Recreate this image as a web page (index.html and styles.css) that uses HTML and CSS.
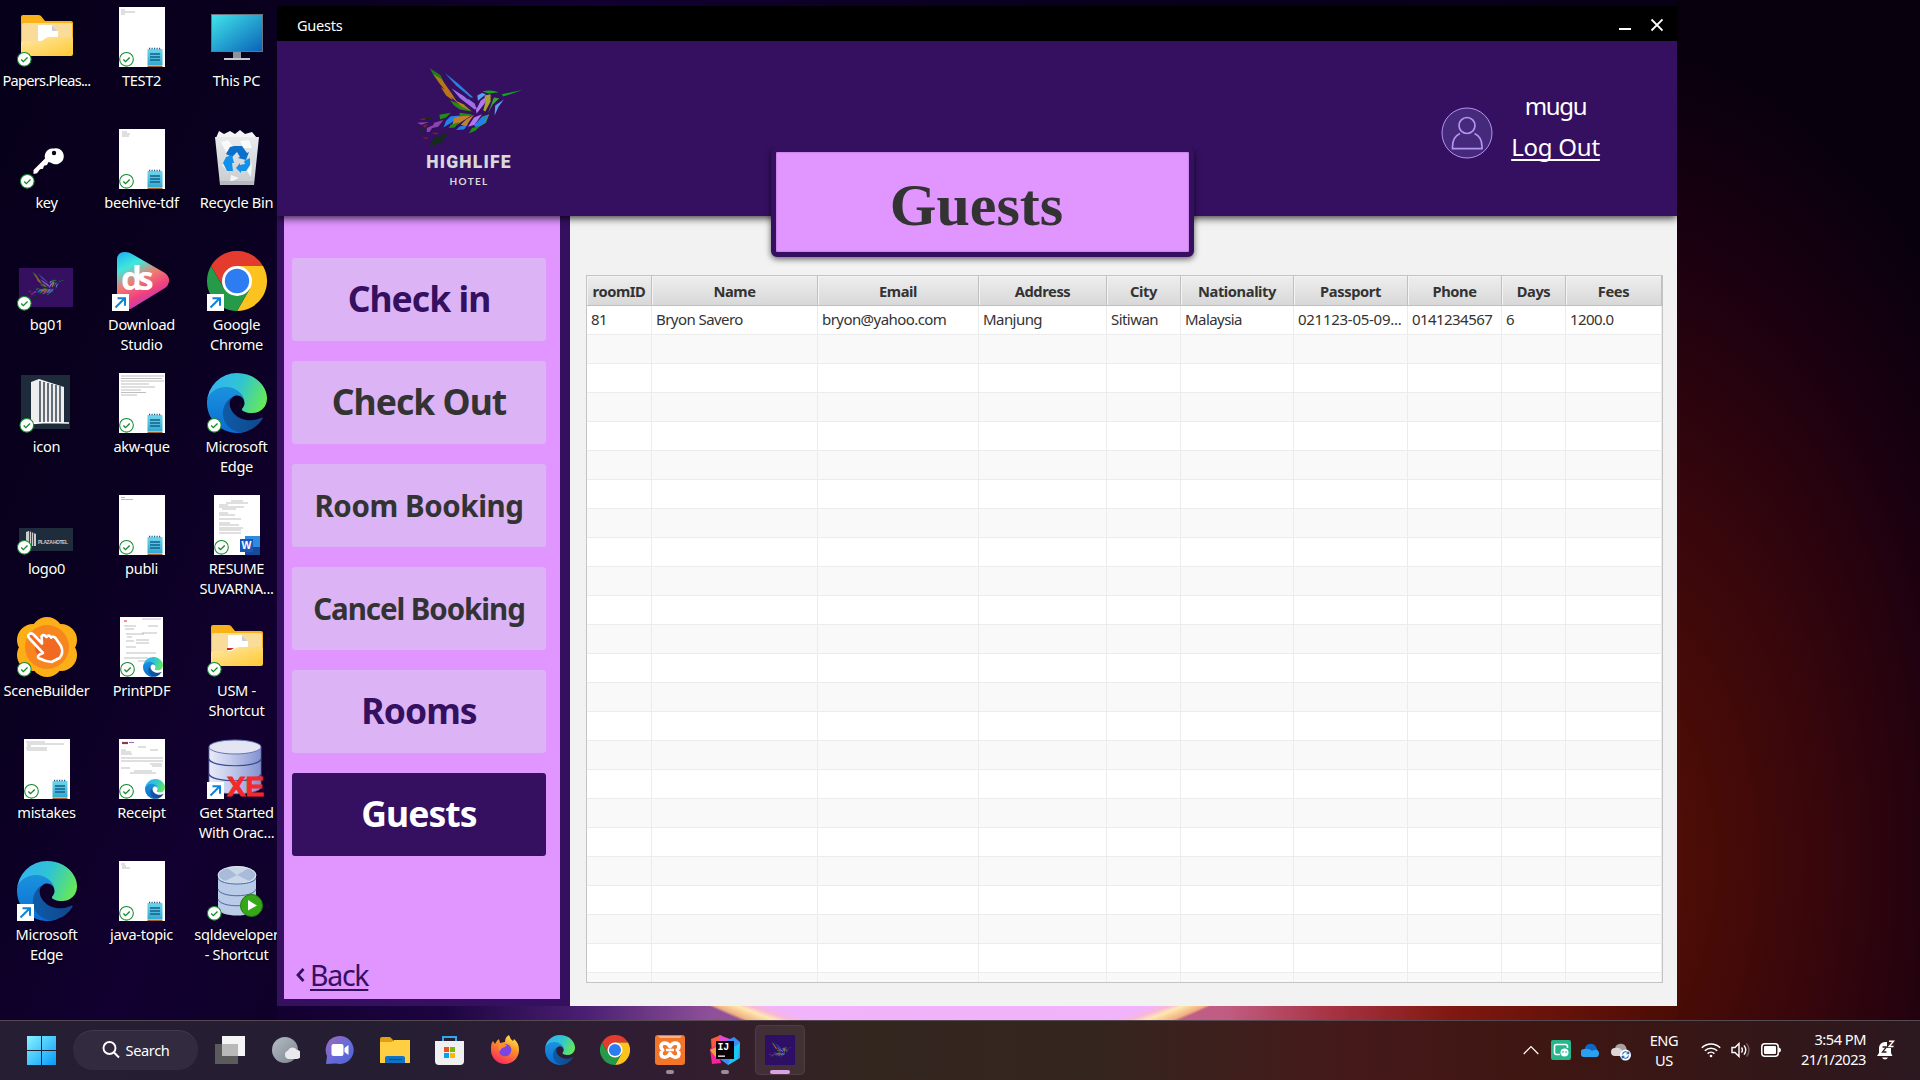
FILE: index.html
```html
<!DOCTYPE html>
<html lang="en">
<head>
<meta charset="utf-8">
<title>Guests</title>
<link rel="stylesheet" href="styles.css">
</head>
<body>
<svg class="defs" aria-hidden="true">
  <defs>
    <linearGradient id="gFolder" x1="0" y1="0" x2="1" y2="1"><stop offset="0" stop-color="#ffe9a6"/><stop offset="1" stop-color="#ffc832"/></linearGradient>
    <linearGradient id="gScreen" x1="0" y1="0" x2="1" y2="1"><stop offset="0" stop-color="#40e4ea"/><stop offset="1" stop-color="#0a63b8"/></linearGradient>
    <linearGradient id="gPad" x1="0" y1="0" x2="0" y2="1"><stop offset="0" stop-color="#6fd6ee"/><stop offset="1" stop-color="#35a9cf"/></linearGradient>
    <linearGradient id="gEdge1" x1="0" y1=".3" x2="1" y2=".6"><stop offset="0" stop-color="#36b0f5"/><stop offset=".5" stop-color="#2fc5d2"/><stop offset="1" stop-color="#66e858"/></linearGradient>
    <linearGradient id="gEdge2" x1=".3" y1="0" x2=".3" y2="1"><stop offset="0" stop-color="#1c95de"/><stop offset="1" stop-color="#0a6cd2"/></linearGradient>
    <linearGradient id="gEdge3" x1="0" y1="0" x2="1" y2="0"><stop offset="0" stop-color="#0e5ca8"/><stop offset="1" stop-color="#10478c"/></linearGradient>
    <linearGradient id="gDs" x1=".1" y1="0" x2=".55" y2="1"><stop offset="0" stop-color="#20b8f0"/><stop offset=".25" stop-color="#3fe8dc"/><stop offset=".5" stop-color="#ee7f70"/><stop offset=".75" stop-color="#f0407f"/><stop offset="1" stop-color="#a03cd8"/></linearGradient>
    <linearGradient id="gDb" x1="0" y1="0" x2="1" y2="0"><stop offset="0" stop-color="#e9ebf8"/><stop offset=".4" stop-color="#c5cdec"/><stop offset="1" stop-color="#8292d0"/></linearGradient>
    <linearGradient id="gBin" x1="0" y1="0" x2="0" y2="1"><stop offset="0" stop-color="#e8eaec"/><stop offset="1" stop-color="#c9ccd0"/></linearGradient>
    <linearGradient id="gWin" x1="0" y1="0" x2="1" y2="1"><stop offset="0" stop-color="#86f3ff"/><stop offset="1" stop-color="#089af8"/></linearGradient>
    <linearGradient id="gChat" x1="0" y1="0" x2="1" y2="1"><stop offset="0" stop-color="#a267b8"/><stop offset=".5" stop-color="#6a6bd8"/><stop offset="1" stop-color="#4b62d8"/></linearGradient>
    <linearGradient id="gFox" x1=".8" y1="0" x2=".3" y2="1"><stop offset="0" stop-color="#fff04a"/><stop offset=".45" stop-color="#ff8a28"/><stop offset="1" stop-color="#f82860"/></linearGradient>
    <linearGradient id="gGrey" x1="0" y1="0" x2="1" y2="1"><stop offset="0" stop-color="#b5bcc4"/><stop offset="1" stop-color="#7c858e"/></linearGradient>

    <symbol id="ok" viewBox="0 0 16 16"><circle cx="8" cy="8" r="7" fill="#fff" stroke="#128a2c" stroke-width="1.1"/><path d="M4.8 8.2l2.2 2.2 4.3-4.3" fill="none" stroke="#128a2c" stroke-width="1.4"/></symbol>
    <symbol id="link" viewBox="0 0 17 17"><path d="M0 0h17v17H0z" fill="#fff"/><path d="M3.5 13.5L12 5M5.5 4.3H13v7.4" fill="none" stroke="#0f82d8" stroke-width="2"/></symbol>
    <symbol id="edge" viewBox="0 0 256 256">
      <path fill="url(#gEdge3)" d="M231 190.500c-3.400 1.800-6.900 3.400-10.500 4.700a101.200 101.200 0 0 1-35.800 6.500c-47.200 0-88.200-32.500-88.200-74.100 0-11.400 6.400-21.900 16.400-27.300-42.700 1.800-53.700 46.300-53.700 72.300 0 73.800 68 81.200 82.600 81.200 7.900 0 19.800-2.300 27-4.600l1.300-.4a128.300 128.300 0 0 0 66.600-52.800 4 4 0 0 0-5.700-5.500z"/>
      <path fill="url(#gEdge2)" d="M105.700 241.400a79.200 79.200 0 0 1-22.700-21.300 80.700 80.700 0 0 1 29.500-120.100c3.200-1.500 8.400-4.100 15.500-4a32.400 32.400 0 0 1 25.700 13 31.900 31.900 0 0 1 6.300 18.700c0-.2 24.500-79.600-80-79.600-43.900 0-80 41.700-80 78.200-.2 19.300 4 38.500 12.100 56a128 128 0 0 0 156.400 67 75.500 75.500 0 0 1-62.800-8z"/>
      <path fill="url(#gEdge1)" d="M152.300 148.900c-.9 1-3.400 2.500-3.400 5.600 0 2.600 1.700 5.200 4.800 7.300 14.400 10.100 41.700 8.700 41.800 8.700 10.700 0 21.300-2.900 30.500-8.400A61.800 61.800 0 0 0 256 109c.3-22.300-8-37.200-11.300-43.800C223.500 23.900 177.700 0 128 0A128 128 0 0 0 0 126.200c.5-36.500 36.800-66 80-66 3.500 0 23.500.3 42 10.100 16.300 8.600 24.900 18.900 30.800 29.200 6.200 10.700 7.300 24.200 7.300 29.500s-2.700 13.400-7.800 19.900z"/>
    </symbol>
    <symbol id="chrome" viewBox="0 0 60 60">
      <path fill="#e33b2e" d="M4 15A30 30 0 0 1 56 15L30 15 17 37.500z"/>
      <path fill="#fcc31e" d="M56 15A30 30 0 0 1 30 60L43 37.500 30 15z"/>
      <path fill="#259a49" d="M30 60A30 30 0 0 1 4 15L17 37.500 43 37.500z"/>
      <circle cx="30" cy="30" r="15" fill="#fff"/><circle cx="30" cy="30" r="12.200" fill="#2e7cf2"/>
    </symbol>
    <symbol id="folder" viewBox="0 0 60 60">
      <path fill="#f9b21a" d="M4 10q0-2 2-2h15q2 0 3 1l4 5h26q2 0 2 2v20H4z"/>
      <path fill="#f8dc98" d="M5 18q0-2 2-2h46q2 0 2 2v20H5z"/>
      <path fill="#fff" d="M21 18h14l6 6v14H21z"/><path fill="#cdcdd6" d="M35 18v6h6z"/>
      <path fill="url(#gFolder)" d="M4 36q0-2 2-2h17q2 0 3-1l3-2q2-1 4-1h21q2 0 2 2v15q0 2-2 2H6q-2 0-2-2z"/>
    </symbol>
    <symbol id="pad" viewBox="0 0 16 20"><path fill="url(#gPad)" d="M.5 2h15v16H.5z"/><path fill="#a4602c" d="M.5 18.500h15V20H.5z"/><path stroke="#12628c" stroke-width="1.300" d="M3 7h10M3 10h10M3 13h10"/><path stroke="#12628c" stroke-width="1.500" stroke-dasharray="1.200 1.300" d="M2 1.500h12.500"/></symbol>
    <symbol id="sheet" viewBox="0 0 60 60"><path fill="#fff" d="M7 0h46v60H7z"/><use href="#pad" x="35" y="40" width="16" height="20"/><use href="#ok" x="6.700" y="44.500" width="15.600" height="15.600"/></symbol>
    <symbol id="bird" viewBox="100 75 330 250">
      <path fill="#1f7d1c" d="M147 82l32 20 12 26 18 30-34-32-16-22z"/>
      <path fill="#b8761a" d="M158 100l24 14 30 42 20 32-26-24-28-34zM180 138l26 18 10 22-20-14z"/>
      <path fill="#2a7fe0" d="M192 96l40 32 46 42-8 0-44-36z"/>
      <path fill="#9d6fe8" d="M212 142l38 24 38 34-6 6-44-34zM260 172l22 16 8 22-16-16z"/>
      <path fill="#28881a" d="M208 178l30 12 34 22-34-6-18-12z"/><path fill="#b8861a" d="M222 178l26 12 26 22-30-14z"/>
      <path fill="#0eaa1c" d="M305 152q26-8 50 2l-30 4zM364 160l62-13-58 20z"/>
      <path fill="#5c9ff0" d="M290 164l14-8 12 4-24 20zM344 194l26-18-16 22-12 26z"/>
      <path fill="#a9a32c" d="M312 164l18-4 0 22-16 30-6-4 6-22z"/>
      <path fill="#3aa438" d="M340 170l16 2-20 20-14 26zM304 228l22-8-10 26-24 14z"/>
      <path fill="#b078ee" d="M300 180l18-14-6 22-24 30-2-10zM280 230l24-10-22 32-20 6z"/>
      <path fill="#2282ec" d="M302 230l20-6-12 24-22 12-8-6zM210 226l30-2-32 24-20 12 8-20zM236 258l28-10-14 18-24 2z"/>
      <path fill="#c0802c" d="M220 232l32-10 20 2-40 26-18 6zM256 236l24-14-24 34-16-4z"/>
      <path fill="#228c18" d="M176 222l34-6-14 14-18 6zM236 216l34 4 8 4-40 2zM210 252l26-8-14 16-18 2zM274 262l24-6-14 14-20 8z"/>
      <path fill="#8c45b0" d="M160 246l28-8-16 20-18 4zM108 246l36-2-22 8zM138 262l22-10-14 22-8 0z"/>
      <path fill="#7c251c" d="M112 236l28-6-10 8zM126 254l16-4-10 12zM124 290l20 0-8 6zM152 276l24 0-12 6z"/>
      <path fill="#122d18" d="M112 268l22-6-10 10zM144 318l16-26 38-10-14 22-26 10zM128 230l26 2-10 6zM176 284l30-10-12 12z"/>
    </symbol>
  </defs>
</svg>

<main class="desktop">
  <figure class="ico"><svg viewBox="0 0 60 60"><use href="#folder"/><use href="#ok" x="-.5" y="44.500" width="15.600" height="15.600"/></svg><figcaption class="tight">Papers.Pleas...</figcaption></figure>
  <figure class="ico"><svg viewBox="0 0 60 60"><path fill="#fff" d="M37 19.500a8 8 0 1 1-3 14.200l-2.500-.7-1.500 3-3 .7-1 3-3 .5-3 4-3.500.8V41l11.500-11.500A8 8 0 0 1 37 19.500z"/><circle cx="37" cy="24" r="2.200" fill="#0a0020"/><use href="#ok" x="2.500" y="44.500" width="15.600" height="15.600"/></svg><figcaption>key</figcaption></figure>
  <figure class="ico"><svg viewBox="0 0 60 60"><path fill="#351061" d="M2 17h54v39H2z"/><use href="#bird" x="7" y="20" width="45" height="30" opacity=".75"/><use href="#ok" x="-.5" y="44.500" width="15.600" height="15.600"/></svg><figcaption>bg01</figcaption></figure>
  <figure class="ico"><svg viewBox="0 0 60 60"><path fill="#1d2b3a" d="M4 2h49v54H4z"/><path fill="#eee" d="M14 9l8-3 25 8v36H14z"/><path stroke="#1d2b3a" stroke-width="1.300" d="M23 8v41M27 9v40M31 10v39M35 11v38M39 12v37M43 13v36"/><path stroke="#fff" stroke-width="1.500" d="M8 51l22-1.500 22 .5"/><use href="#ok" x="2" y="44.500" width="15.600" height="15.600"/></svg><figcaption>icon</figcaption></figure>
  <figure class="ico"><svg viewBox="0 0 60 60"><path fill="#1f2c3b" d="M2 33h54v23H2z"/><path fill="#ccc" d="M9 37l3-1 7 3v12H9z"/><path stroke="#1f2c3b" stroke-width=".8" d="M12.500 36v15M14.500 37v14M16.500 38v13"/><text x="21" y="49" class="tPlaza" textLength="30">PLAZA HOTEL</text><use href="#ok" x="-.5" y="44.500" width="15.600" height="15.600"/></svg><figcaption>logo0</figcaption></figure>
  <figure class="ico"><svg viewBox="0 0 60 60"><g fill="#fcaf17"><circle cx="30" cy="16" r="16"/><circle cx="44" cy="23" r="16"/><circle cx="44" cy="38" r="16"/><circle cx="30" cy="44" r="16"/><circle cx="16" cy="38" r="16"/><circle cx="16" cy="23" r="16"/></g><circle cx="30" cy="30" r="22" fill="#f7861f"/><circle cx="30" cy="30" r="12" fill="#f0522a"/><path fill="#f26a22" stroke="#fff" stroke-width="2.600" stroke-linejoin="round" d="M12.500 21.500q-2.500-3 0-4.500 2-1.500 4.500 1l8 8.500-.5-7q1.500-2.500 4-.5l1 1q1.500-2.500 4-.5l.8 1.200q2-2 4.200.3l5.500 8q3 7-1.500 12l-8 4q-6-.5-12-3.500-3-1.500 0-4l3.500-1.500z"/><use href="#ok" x="-.5" y="44.500" width="15.600" height="15.600"/></svg><figcaption>SceneBuilder</figcaption></figure>
  <figure class="ico"><svg viewBox="0 0 60 60"><use href="#sheet"/><path class="ln" d="M9 3h19M10 5h37M10 7h4M9 9h21M10 11h20"/></svg><figcaption>mistakes</figcaption></figure>
  <figure class="ico"><svg viewBox="0 0 60 60"><use href="#edge"/><use href="#link" y="43" width="17" height="17"/></svg><figcaption>Microsoft<br>Edge</figcaption></figure>

  <figure class="ico"><svg viewBox="0 0 60 60"><use href="#sheet"/><path class="ln" d="M9 3h4M9 5h14M9 7h4"/></svg><figcaption>TEST2</figcaption></figure>
  <figure class="ico"><svg viewBox="0 0 60 60"><use href="#sheet"/><path class="ln" d="M10 3h5M10 5h8M10 7h7"/></svg><figcaption>beehive-tdf</figcaption></figure>
  <figure class="ico"><svg viewBox="0 0 60 60"><path fill="url(#gDs)" d="M5 9q0-8 8-8 4 0 7 2l33 19q5 4 4 9-1 4-4 6L22 56q-4 3-8 3-9-1-9-8z"/><text x="9" y="39" class="tDs" textLength="32">ds</text><use href="#link" y="43" width="17" height="17"/></svg><figcaption>Download<br>Studio</figcaption></figure>
  <figure class="ico"><svg viewBox="0 0 60 60"><use href="#sheet"/><path class="ln" d="M9 3h43M9 5.500h41M9 8h43M9 11h28M9 14h34M9 17h20M9 19.500h25M9 22h16"/></svg><figcaption>akw-que</figcaption></figure>
  <figure class="ico"><svg viewBox="0 0 60 60"><use href="#sheet"/><path class="ln" d="M9 2.500h4M9 4.500h12"/></svg><figcaption>publi</figcaption></figure>
  <figure class="ico"><svg viewBox="0 0 60 60"><path fill="#fff" d="M8 0h43v60H8z"/><path class="ln" d="M30 2h19M12 9h12M13 12h9M36 9h10M14 17h18M15 20h5M30 16h15M14 24h8M24 23h13M24 26h13M14 30h10M14 36h30M12 41h24M26 44h14"/><path stroke="#e54848" stroke-width="1.200" d="M12 4h3"/><use href="#edge" x="31" y="40" width="20" height="20"/><use href="#ok" x="7.700" y="44.500" width="15.600" height="15.600"/></svg><figcaption>PrintPDF</figcaption></figure>
  <figure class="ico"><svg viewBox="0 0 60 60"><path fill="#fff" d="M7 0h46v60H7z"/><path class="ln" d="M26 8h8M9 11h5M9 13h10M9 15h11M38 11h8M9 19h42M9 22h42M38 25h12M40 27h10M9 29h9M22 32h18M18 34h26"/><path stroke="#8a3a48" stroke-width="2.200" d="M10 4h6"/><path stroke="#9a6ac0" stroke-width="1" d="M17 3.500h5"/><use href="#edge" x="33" y="40" width="20" height="20"/><use href="#ok" x="6.700" y="44.500" width="15.600" height="15.600"/></svg><figcaption>Receipt</figcaption></figure>
  <figure class="ico"><svg viewBox="0 0 60 60"><use href="#sheet"/><path class="ln" d="M9 3h4M10 5h4M10 7h8"/></svg><figcaption>java-topic</figcaption></figure>

  <figure class="ico"><svg viewBox="0 0 60 60"><path fill="#8b959e" d="M26 45h8v7h-8z"/><path fill="#c3cad0" d="M17 51h26v2H17z"/><path fill="#69747e" d="M4 7h52v38H4z"/><path fill="url(#gScreen)" d="M5 8h50v36H5z"/></svg><figcaption>This PC</figcaption></figure>
  <figure class="ico"><svg viewBox="0 0 60 60"><path fill="#f4f4f5" d="M9 9l3-7 5 3 6-3 5 3 5-4 5 4 7-2 5 6-2 6H11z"/><path fill="url(#gBin)" d="M8 8h44l-5 48H13z"/><path fill="#fff" d="M14 13l7-2 6 8-8 4zM33 12l9-1 3 8-9 0zM15 36l6-5 0 12zM40 42l5-8-1 14zM24 46l8 3-9 4z" opacity=".8"/><path fill="#0b6fcc" d="M23 18l4-1h8l5 7 2-1-3 8-8-2 2-1-3-5-5 5-6-3z"/><path fill="#1191ea" d="M19 28l6-2 2 8-2 0 1 8-6 0-4-8zM43 29l-6 3 1 3-5 1v-2l-4 5 5 5v-2h5l4-6z"/><path fill="#b5b8bd" d="M13 52h34l-.5 4H13.400z"/></svg><figcaption>Recycle Bin</figcaption></figure>
  <figure class="ico"><svg viewBox="0 0 60 60"><use href="#chrome"/><use href="#link" y="43" width="17" height="17"/></svg><figcaption>Google<br>Chrome</figcaption></figure>
  <figure class="ico"><svg viewBox="0 0 60 60"><use href="#edge"/><use href="#ok" x="-.5" y="44.500" width="15.600" height="15.600"/></svg><figcaption>Microsoft<br>Edge</figcaption></figure>
  <figure class="ico"><svg viewBox="0 0 60 60"><path fill="#fff" d="M7 0h46v60H7z"/><path class="ln" d="M24 6h12M19 8h22M12 10h9M12 12h25M15 14h14M12 18h9M12 20h16M12 24h22M12 28h11M12 30h20M12 33h24M12 35h22M12 38h22"/><path fill="#2f8be0" d="M38 41h15v19H38z"/><path fill="#174a9c" d="M38 52h15v8H38z"/><path fill="#1d56b4" d="M33 44h13v13H33z"/><text x="34.500" y="54.300" class="tWord">W</text><use href="#ok" x="6.700" y="44.500" width="15.600" height="15.600"/></svg><figcaption>RESUME<br>SUVARNA...</figcaption></figure>
  <figure class="ico"><svg viewBox="0 0 60 60"><use href="#folder"/><path fill="#d8232a" d="M20 31h7l-3 2h-4z"/><use href="#ok" x="-.5" y="44.500" width="15.600" height="15.600"/></svg><figcaption>USM -<br>Shortcut</figcaption></figure>
  <figure class="ico"><svg viewBox="0 0 60 60"><path fill="url(#gDb)" stroke="#5a68a8" stroke-width=".8" d="M2 8v40c0 9 52 9 52 0V8z"/><ellipse cx="28" cy="8" rx="26" ry="7" fill="#e3e5f2" stroke="#6874b0"/><path fill="none" stroke="#3c4a92" stroke-width="1.200" d="M2 20c2 9 50 9 52 0M2 35c2 9 50 9 52 0"/><text x="20" y="56.500" class="tXe" textLength="37" lengthAdjust="spacingAndGlyphs">XE</text><use href="#link" y="43" width="17" height="17"/></svg><figcaption>Get Started<br>With Orac...</figcaption></figure>
  <figure class="ico"><svg viewBox="0 0 60 60"><path fill="#b9cbe6" d="M11 14v33c0 10 38 10 38 0V14z"/><ellipse cx="30" cy="14" rx="19" ry="8.500" fill="#a9bbd8" stroke="#e4edf8"/><path fill="#dfe9f5" d="M30 14L42 7q-12-4-22 0zM30 14l-12 6q12 4 24 0z" opacity=".6"/><path fill="none" stroke="#4b67a0" stroke-width="1" d="M11 17c2 8 36 8 38 0M11 28c2 9 36 9 38 0M11 38c2 9 36 9 38 0"/><circle cx="44.500" cy="44.500" r="11" fill="#36a818" stroke="#1d7a10"/><path fill="#fff" d="M41 39l9 5.500-9 5z"/><use href="#ok" x="-.5" y="44.500" width="15.600" height="15.600"/></svg><figcaption>sqldeveloper<br>- Shortcut</figcaption></figure>
</main>

<section class="window">
  <header class="titlebar">
    <span>Guests</span>
    <svg class="winbtns" width="44" height="14" viewBox="0 0 44 14"><path fill="#fff" d="M0 10h12v2H0z"/><path stroke="#fff" stroke-width="1.800" d="M32.500 1.500l11 11M43.500 1.500l-11 11"/></svg>
  </header>
  <div class="banner">
    <div class="logo">
      <svg width="110" height="83" viewBox="0 0 110 83"><use href="#bird" width="110" height="83"/></svg>
      <b>HIGHLIFE</b><i>HOTEL</i>
    </div>
    <div class="account">
      <svg width="52" height="52" viewBox="0 0 52 52" fill="none" stroke="#b493f2"><circle cx="26" cy="26" r="25" fill="#452a7c"/><circle cx="26" cy="18.500" r="8" stroke-width="1.700"/><path stroke-width="1.700" d="M19 26.500q-7.500 3.500-7.500 13v2.200h29.500v-2.200q0-9.500-7.500-13"/></svg>
      <div class="links"><span>mugu</span><a>Log Out</a></div>
    </div>
    <h1 class="plate">Guests</h1>
  </div>
  <div class="body">
    <nav class="side">
      <a class="btn violet">Check in</a>
      <a class="btn">Check Out</a>
      <a class="btn small room">Room Booking</a>
      <a class="btn small">Cancel Booking</a>
      <a class="btn violet">Rooms</a>
      <a class="btn on">Guests</a>
      <div class="back"><svg width="10" height="16" viewBox="0 0 10 16"><path d="M8.500 2L3 8l5.500 6" fill="none" stroke="#351061" stroke-width="2.800"/></svg><a>Back</a></div>
    </nav>
    <div class="content">
      <div class="table" id="guests">
        <div class="row head"><span>roomID</span><span>Name</span><span>Email</span><span>Address</span><span>City</span><span>Nationality</span><span>Passport</span><span>Phone</span><span>Days</span><span>Fees</span></div>
        <div class="row"><span>81</span><span>Bryon Savero</span><span>bryon@yahoo.com</span><span>Manjung</span><span>Sitiwan</span><span>Malaysia</span><span class="wide">021123-05-09...</span><span>0141234567</span><span>6</span><span>1200.0</span></div>
      </div>
    </div>
  </div>
</section>

<footer class="taskbar">
  <div class="apps">
    <svg class="start" viewBox="0 0 30 30"><path fill="url(#gWin)" d="M0 0h14v14H0zM15 0h14v14H15zM0 15h14v14H0zM15 15h14v14H15z"/></svg>
    <div class="search"><svg width="18" height="18" viewBox="0 0 18 18" fill="none" stroke="#fff" stroke-width="1.900"><circle cx="7.500" cy="7" r="6"/><path d="M12 11.500l5 5"/></svg>Search</div>
    <div class="app"><svg viewBox="0 0 30 30"><path fill="#f5f5f5" d="M7 1h23v20H7z"/><path fill="#5b5b5b" d="M0 9h23v20H0z"/><path fill="#b9b9b9" d="M7 9h16v12H7z"/></svg></div>
    <div class="app"><svg viewBox="0 0 30 30"><circle cx="15" cy="15" r="13" fill="url(#gGrey)"/><path fill="#e8eaed" d="M18 24a4.500 4.500 0 0 1 0-8.500 5 5 0 0 1 9-.5 4.500 4.500 0 0 1 0 9z"/></svg></div>
    <div class="app"><svg viewBox="0 0 30 30"><path fill="url(#gChat)" d="M15 1a14 14 0 1 1-4 27.500L1 29l1-8A14 14 0 0 1 15 1z"/><rect x="6.500" y="9" width="12" height="12" rx="2" fill="#fff"/><path fill="#fff" d="M19.500 13l4-3v10l-4-3z"/></svg></div>
    <div class="app"><svg viewBox="0 0 30 30"><path fill="#e2a010" d="M0 4q0-2 2-2h8l3 3v4H0z"/><path fill="#ffce42" d="M0 7h12l2-2h16v23H0z"/><path fill="#0f74c8" d="M5 28v-5q0-2 2-2h16q2 0 2 2v5z"/><path stroke="#0a4f94" stroke-width="1.200" d="M9 24.500h13"/></svg></div>
    <div class="app"><svg viewBox="0 0 30 30"><path fill="none" stroke="#30a8e8" stroke-width="2" d="M8 8V2h13v6"/><path fill="#f0f0f0" d="M0 6h29v20q0 4-4 4H4q-4 0-4-4z"/><path fill="#f25022" d="M9 12h5v5H9z"/><path fill="#7fba00" d="M15 12h5v5h-5z"/><path fill="#00a4ef" d="M9 18h5v5H9z"/><path fill="#ffb900" d="M15 18h5v5h-5z"/></svg></div>
    <div class="app"><svg viewBox="0 0 30 30"><path fill="url(#gFox)" d="M1 13Q1 8 3 6l2 3q1-3 4-5l1 4 5-1q0-5 4-7 1 4 4 6l1-2q5 4 5 11A14 14 0 0 1 1 15z"/><circle cx="15" cy="15" r="6.300" fill="#7a45e0"/><path fill="#ff8a28" d="M8 10q4-3 9 0-2 3-5 3l-3 4z"/></svg></div>
    <div class="app"><svg viewBox="0 0 30 30"><use href="#edge"/></svg></div>
    <div class="app"><svg viewBox="0 0 30 30"><use href="#chrome"/></svg></div>
    <div class="app run"><svg viewBox="0 0 30 30"><rect width="30" height="30" rx="3" fill="#f1762a"/><path fill="#f9b28a" d="M3 1h24l-2 2H5z"/><g fill="none" stroke="#fff" stroke-width="3.600" stroke-linejoin="round"><path d="M15 11.500Q13 8 9.500 8 6 8.500 6 11.500q0 2 1.700 3.500Q6 16.500 6 18.800q.3 3.200 3.500 3.400 3.500 0 5.500-3.700 2 3.700 5.500 3.700 3.200-.2 3.500-3.400 0-2.300-1.700-3.800Q24 13.500 24 11.500 24 8.500 20.500 8 17 8 15 11.500z"/><path d="M11 15h8" stroke-width="2.600"/></g></svg></div>
    <div class="app run"><svg viewBox="0 0 30 30"><path fill="#fc5a3c" d="M1 4l10-4 5 6-6 12-8 2z"/><path fill="#f8209c" d="M0 14l7-4 4 18-9 1z"/><path fill="#f0a038" d="M0 15l6-3 1 12z"/><path fill="#e04ad0" d="M9 0l11 4 4 6-14-2z"/><path fill="#3a8df8" d="M16 6l8-4 6 5v16l-12 7-8-6z"/><path fill="#18c8f0" d="M24 12l6-4-2 16-10 6z"/><path fill="#0a0005" d="M6 6h18v18H6z"/><text x="7.500" y="14.500" class="tIj">IJ</text><path fill="#fff" d="M8 20.500h7v1.300H8z"/></svg></div>
    <div class="app active"><svg viewBox="0 0 30 30"><path fill="#2f0f66" d="M0 0h30v30H0z"/><use href="#bird" x="3" y="4" width="25" height="24" opacity=".8"/></svg></div>
  </div>
  <div class="tray">
    <svg width="16" height="10" viewBox="0 0 16 10"><path d="M.7 9L8 1.500 15.300 9" fill="none" stroke="#fff" stroke-width="1.200"/></svg>
    <svg class="g12" width="20" height="20" viewBox="0 0 20 20"><rect width="20" height="20" rx="2" fill="#26b68c"/><path d="M9 14.500H5.500q-2 0-2-2v-6q0-2 2-2h9q2 0 2 2V8" fill="none" stroke="#fff" stroke-width="1.600"/><circle cx="13.500" cy="12.500" r="4" fill="#fff"/><path stroke="#26b68c" d="M11 12h2M14 12h2"/></svg>
    <svg class="g10" width="20" height="14" viewBox="0 0 20 14"><path fill="#0b68c8" d="M4 5a6 6 0 0 1 11-1l3 6H3z"/><path fill="#2aa0ee" d="M4 14a4 4 0 0 1-1-8q5-1 8 2 3-2 5-1a4 4 0 0 1 0 7z"/></svg>
    <svg class="g10 down" width="20" height="18" viewBox="0 0 20 18"><path fill="#a9a0a0" d="M4 5a6 6 0 0 1 11-1l2 7H4z"/><path fill="#ddd6d6" d="M4 13a4 4 0 0 1 0-8q4-1 7 2v6z"/><circle cx="14.500" cy="12" r="5.500" fill="#fff"/><path d="M11.500 11.500a3.200 3.200 0 0 1 6-1M17.500 12.500a3.200 3.200 0 0 1-6 1M17.800 8.500v2.300h-2.300M11.200 15.500v-2.300h2.300" fill="none" stroke="#1668c0" stroke-width="1.100"/></svg>
    <div class="lang">ENG<br>US</div>
    <svg class="wifi" width="20" height="16" viewBox="0 0 20 16" fill="none" stroke="#fff" stroke-width="1.500"><path d="M.8 5.800a13 13 0 0 1 18.400 0M3.800 8.800a8.800 8.800 0 0 1 12.400 0M6.600 11.600a5 5 0 0 1 6.800 0"/><circle cx="10" cy="14" r="1.300" fill="#fff" stroke="none"/></svg>
    <svg class="g10" width="20" height="16" viewBox="0 0 20 16" fill="none" stroke="#fff" stroke-width="1.400"><path d="M1 5.500h3L8 1.500v13L4 10.500H1zM10.500 5.500q1.800 2.500 0 5M13 3.300q3.500 4.700 0 9.400"/><path stroke="#7a605c" d="M15.500 1.300q5 6.700 0 13.400"/></svg>
    <svg class="g10" width="20" height="14" viewBox="0 0 20 14"><rect x=".8" y=".8" width="16.400" height="12.400" rx="3" fill="none" stroke="#fff" stroke-width="1.500"/><rect x="3" y="3" width="12" height="8" rx="1" fill="#fff"/><path fill="#fff" d="M18 4.500q2 .5 2 2.500t-2 2.500z"/></svg>
    <div class="clock">3:54 PM<br>21/1/2023</div>
    <svg class="bell" width="18" height="20" viewBox="0 0 18 20"><path fill="#fff" d="M0 16l2-3V8a6 6 0 0 1 6-6h6v11l1.500 3zM5 17.500h6q-1 2-3 2t-3-2z"/><path d="M5.500 7h4l-4 5h4" fill="none" stroke="#3a1a1a" stroke-width="1.300"/><path fill="#3a1a1a" d="M10 0h8v8h-8z"/><path d="M12 1.200h4.500L12 6.500h4.500" fill="none" stroke="#fff" stroke-width="1.400"/></svg>
  </div>
</footer>
<script src="app.js"></script>
</body>
</html>
```
FILE: styles.css
```css
* { box-sizing: border-box; }
body {
  margin: 0; width: 1920px; height: 1080px; overflow: hidden; position: relative;
  display: flex; flex-direction: column;
  font-family: "Noto Sans", "Open Sans", sans-serif; letter-spacing: -.035em;
  background:
    radial-gradient(circle at 683px -526px, #f4a8f8 0, #f0b4fa 560px, #f8b8d8 566px, #ffe8b0 571px, #f0b080 580px, rgba(240,176,128,0) 583px) 277px 1006px / 1400px 74px no-repeat,
    linear-gradient(90deg, #120030 0, #1d0440 12%, #4a1f72 22%, #8f5098 31%, #b870b0 50%, #c05c80 68%, #a83444 75%, #7f1810 84%, #4a0c04 100%) 277px 1006px / 1400px 74px no-repeat,
    radial-gradient(ellipse 480px 820px at -80px 860px, #5e1008 0, #4a0c06 22%, #36060c 48%, #1a0010 78%, #09000e 100%) 1677px 0 / 243px 1080px no-repeat,
    linear-gradient(115deg, #07001a 0, #0a0020 14%, #120030 24%, #08001c 45%, #090010 100%);
}
.defs { position: absolute; width: 0; height: 0; }
.desktop {
  flex: none; height: 1020px; width: 285px; padding-top: 7px; margin-left: -1px;
  display: grid; grid-auto-flow: column; grid-template-rows: repeat(8, 122px); grid-template-columns: repeat(3, 95px);
}
.ico { margin: 0; display: flex; flex-direction: column; align-items: center; }
.ico svg { width: 60px; height: 60px; flex: none; overflow: visible; }
.ico figcaption {
  margin-top: 3px; color: #fff; font-size: 14.600px; letter-spacing: -.022em; line-height: 20px; text-align: center; white-space: nowrap;
  text-shadow: 0 1px 2px #000;
}
.ico figcaption.tight { letter-spacing: -.05em; }
.ln { stroke: #777; stroke-width: .8; opacity: .6; fill: none; }
.tPlaza { font: 700 5px "Liberation Sans", sans-serif; fill: #ccc; letter-spacing: 0; }
.tDs { font: 700 33px "Open Sans", sans-serif; fill: #fff; }
.tWord { font: 700 10.500px "Liberation Sans", sans-serif; fill: #fff; }
.tXe { font: 700 27px "Liberation Sans", sans-serif; fill: #f5282c; stroke: #f5282c; stroke-width: 1; letter-spacing: 0; }
.tIj { font: 700 10px "Liberation Mono", monospace; fill: #fff; }

.window { position: absolute; left: 277px; top: 6px; width: 1400px; height: 1000px; display: flex; flex-direction: column; background: #351061; }
.titlebar { height: 35px; flex: none; background: #000; color: #fff; display: flex; align-items: center; justify-content: space-between; padding: 2px 14px 0 20px; font-size: 14.600px; letter-spacing: -.02em; }
.banner { height: 175px; flex: none; position: relative; z-index: 1; background: #351061; display: flex; justify-content: space-between; padding: 0 76px 0 136px; box-shadow: 0 2px 8px rgba(0,0,0,.8); clip-path: inset(0 0 -60px 0); }
.logo { width: 112px; padding-top: 25px; display: flex; flex-direction: column; align-items: center; color: #d9d9d9; }
.logo b { font: 900 17.500px/20px "Roboto", sans-serif; letter-spacing: 1.200px; margin: 3px 0 0 0; }
.logo i { font: 700 10px/12px "Lato", sans-serif; letter-spacing: 1.300px; margin: 3px 0 0 0; }
.account { display: flex; align-items: flex-start; gap: 17px; }
.account svg { margin-top: 66px; }
.links { width: 91px; padding-top: 44px; display: flex; flex-direction: column; align-items: center; color: #fff; font-size: 24px; letter-spacing: -.01em; line-height: 41px; white-space: nowrap; }
.links span { letter-spacing: -.055em; }
.links a, .back a { text-decoration: underline; text-decoration-thickness: 2px; text-underline-offset: 3px; text-decoration-skip-ink: none; }
.plate {
  position: absolute; left: 494px; top: 106px; width: 423px; height: 110px; margin: 0; border: 5px solid #351061; border-radius: 6px;
  background: #e095ff; color: #333; font: 700 60px/106px "Liberation Serif", serif; letter-spacing: 0; text-align: center; padding-right: 12px;
  box-shadow: 0 2px 6px rgba(0,0,0,.6), inset 0 0 2px #9a60b8;
  clip-path: inset(0 -10px -12px -10px);
}
.body { flex: 1; display: flex; min-height: 0; }
.side { width: 293px; border: solid #351061; border-width: 0 10px 7px 7px; background: #e095ff; padding: 42px 14px 0 8px; display: flex; flex-direction: column; gap: 20px; }
.btn { height: 83px; flex: none; border-radius: 3px; background: #dcb4f5; color: #333; font-size: 35.500px; font-weight: 700; letter-spacing: -.027em; padding-bottom: 3px; display: flex; align-items: center; justify-content: center; white-space: nowrap; }
.btn.small { font-size: 29.500px; letter-spacing: -.036em; padding-bottom: 1px; }
.btn.room { letter-spacing: -.014em; }
.btn.violet { color: #351061; }
.btn.on { background: #351061; color: #fff; }
.back { margin-top: 77px; padding-left: 3px; display: flex; align-items: center; gap: 5px; color: #351061; font-size: 28.500px; letter-spacing: -.045em; line-height: 44px; }
.content { flex: 1; background: #f2f2f2; padding: 59px 14px 23px 16px; }
.table { height: 708px; border: 1px solid #c4c4c4; overflow: hidden; background: #fff; font-size: 15px; color: #333; }
.row { display: grid; grid-template-columns: 65px 166px 161px 128px 74px 113px 114px 94px 64px 96px; height: 29px; border-bottom: 1px solid #ececec; }
.row span { border-right: 1px solid #ececec; padding-left: 4px; line-height: 27px; white-space: nowrap; overflow: hidden; }
.row .wide { letter-spacing: -.018em; }
.row:nth-child(odd):not(.head) { background: #f9f9f9; }
.row.head { height: 30px; border-bottom-color: #c0c0c0; background: linear-gradient(#eee, #d8d8d8); font-weight: 700; font-size: 14.700px; text-align: center; }
.row.head span { border-right-color: #c0c0c0; padding: 0; line-height: 30px; box-shadow: inset 1px 1px 0 #f4f4f4; letter-spacing: -.028em; }

.taskbar {
  height: 60px; flex: none; position: relative; border-top: 1px solid #564a52; color: #fff; display: flex; justify-content: space-between; font-size: 14.600px; letter-spacing: -.025em;
  background: linear-gradient(90deg, #261f34 0, #251e33 20%, #301d33 33%, #331e2c 38%, #33261f 45%, #36251f 58%, #45191a 70%, #3f1612 80%, #331718 92%, #2b1820 100%);
}
.apps { display: flex; align-items: center; padding: 0 0 2px 27px; }
.start { width: 30px; height: 30px; margin-top: 2px; }
.search { width: 125px; height: 40px; margin: 0 12px 0 16px; border-radius: 20px; background: #322a3f; border-top: 1px solid #423a4e; display: flex; align-items: center; justify-content: center; gap: 6px; }
.app { width: 50px; height: 50px; margin-right: 5px; border-radius: 5px; position: relative; display: flex; align-items: center; justify-content: center; }
.app:nth-child(3) { margin-left: -5px; }
.app svg { width: 30px; height: 30px; }
.app.run::after, .app.active::after { content: ""; position: absolute; bottom: 1px; left: 21px; width: 8px; height: 4px; border-radius: 2px; background: #988e9a; }
.app.active { background: rgba(255,255,255,.07); border: 1px solid rgba(255,255,255,.07); }
.app.active::after { left: 14px; bottom: 0; width: 20px; background: #dda0e4; }
.tray { display: flex; align-items: center; padding: 0 25px 2px 0; }
.g12 { margin-left: 12px; }
.g10 { margin-left: 10px; }
.down { margin-top: 4px; }
.lang { width: 30px; margin: 0 22px 0 18px; text-align: center; line-height: 20px; }
.clock { width: 80px; margin: 0 11px 0 5px; text-align: right; line-height: 20px; padding-bottom: 1px; letter-spacing: -.032em; }
```
FILE: app.js
```js
// Pad the guest table with empty striped rows down to its lower edge.
const table = document.getElementById("guests");
for (let i = 0; i < 23; i++) {
  const row = document.createElement("div");
  row.className = "row";
  row.innerHTML = "<span></span>".repeat(10);
  table.append(row);
}
```
